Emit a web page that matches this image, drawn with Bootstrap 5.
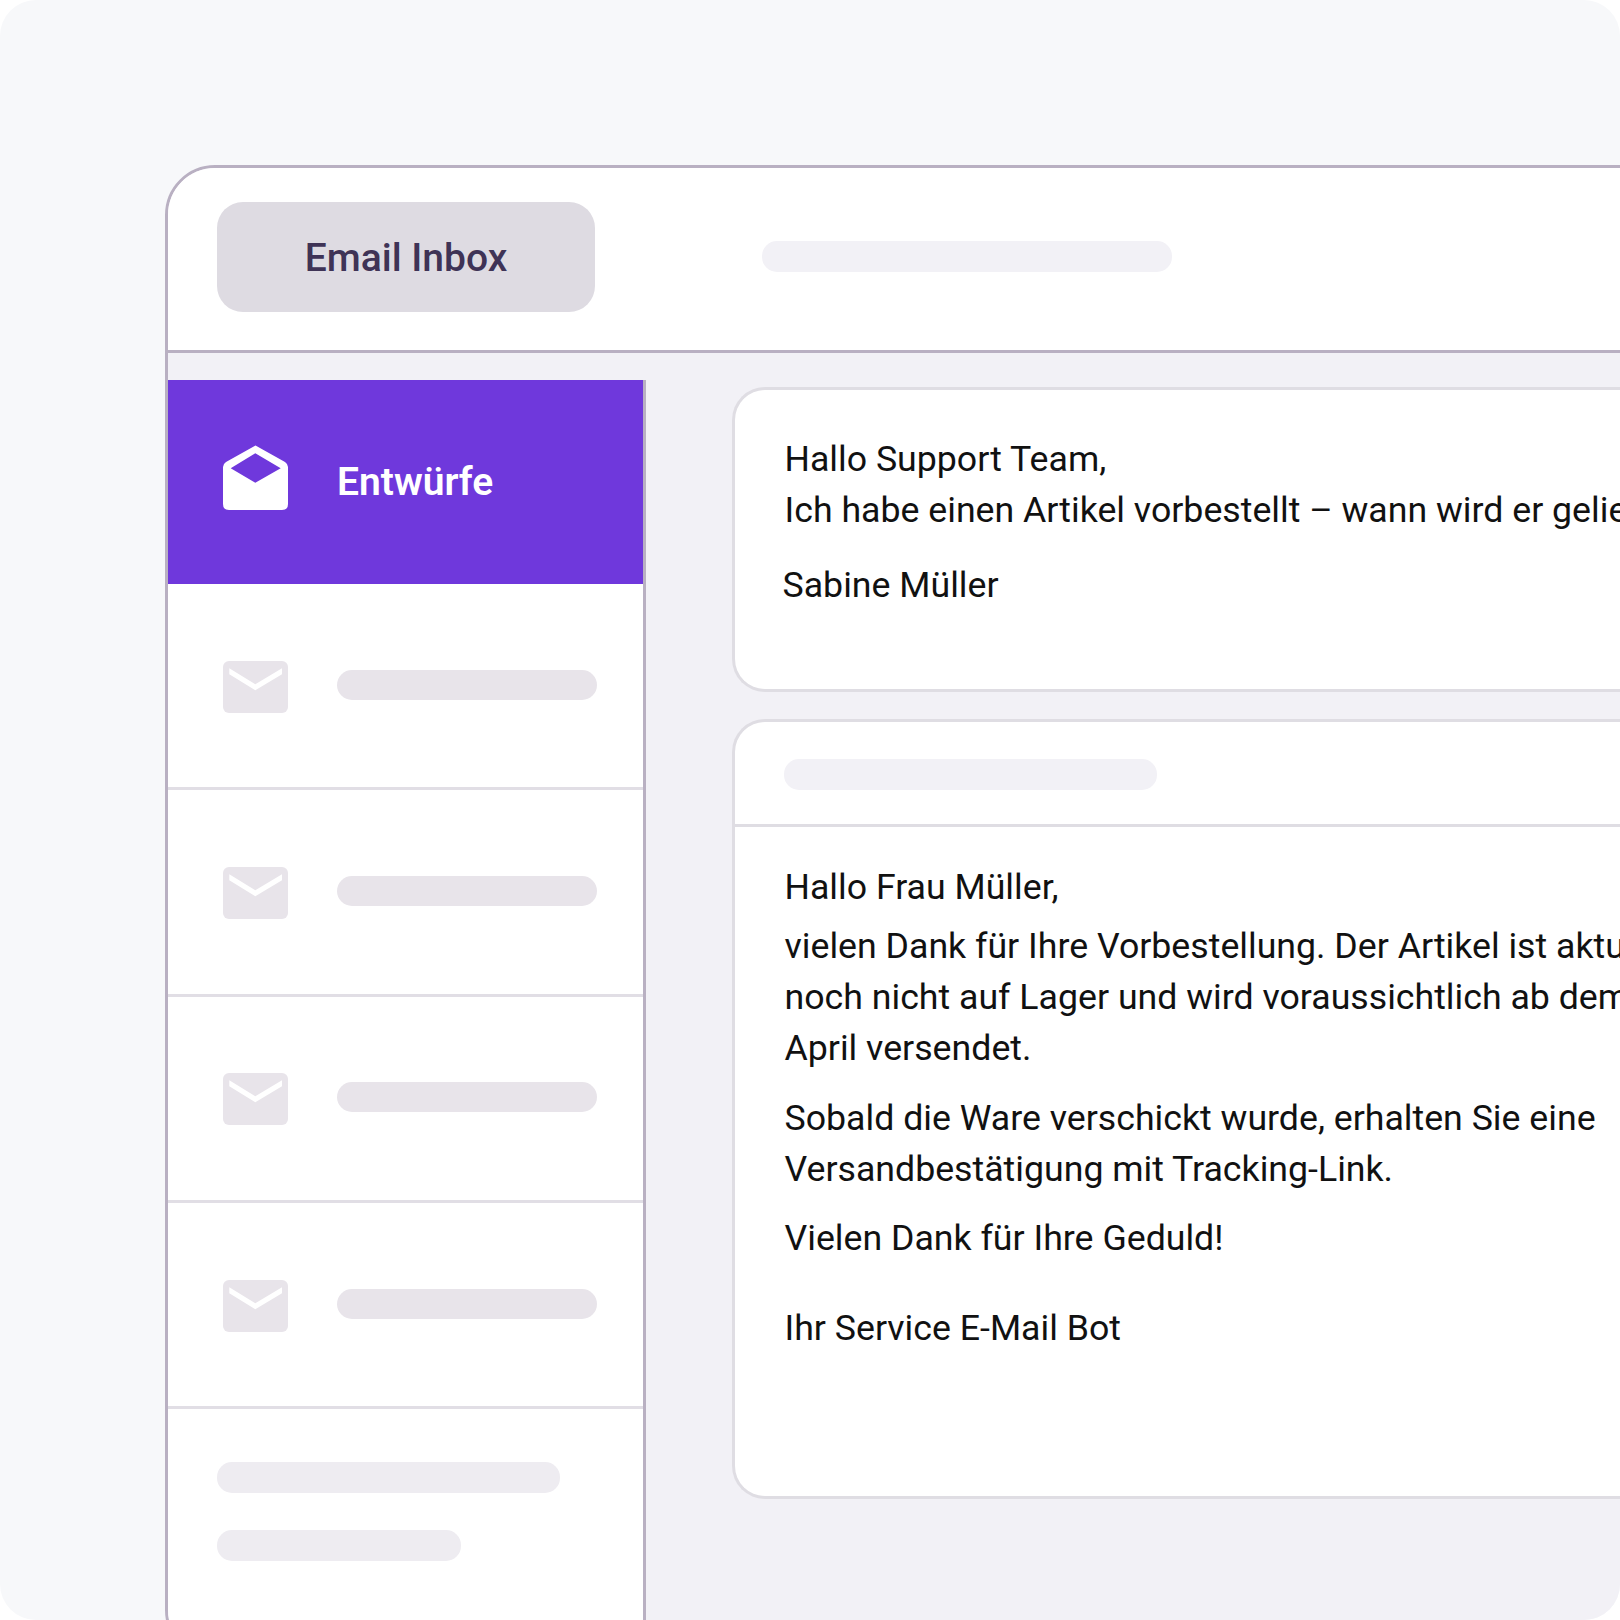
<!DOCTYPE html>
<html lang="de">
<head>
<meta charset="utf-8">
<title>Email Inbox</title>
<link href="https://cdn.jsdelivr.net/npm/bootstrap@5.3.0/dist/css/bootstrap.min.css" rel="stylesheet">
<style>
html,body{margin:0;background:#fff;overflow:hidden}
.stage{width:1620px;height:1620px;background:#f7f8fa;border-radius:36px;padding:165px 0 0 165px;overflow:hidden;font-family:Roboto,"Liberation Sans",sans-serif}
.frame{width:1515px;height:1495px;background:#f2f1f6;border:3px solid #b9b0c2;border-radius:50px;overflow:hidden}
.top-bar{height:185px;background:#fff;border-bottom:3px solid #b9b0c2;padding-left:49px}
.title-pill{width:378px;height:110px;margin-top:-4px;padding-top:2px;background:#dedbe2;border-radius:26px;color:#3f3356;font-size:39px;font-weight:500}
.skel{border-radius:15px;height:31px}
.skel-top{width:410px;margin-left:167px;margin-top:-6px;background:#f2f1f6}
.work{height:1307px}
.side{width:478px;margin-top:27px;background:#fff;border-right:3px solid #b9b0c2;flex:none}
.side-row{height:206.3px;border-bottom:3px solid #e1dee5;padding:2px 0 0 55px;gap:49px}
.side-row.is-active{height:204px;background:#6f38dc;border-bottom:0;color:#fff;font-size:39px;font-weight:600;padding:0 0 0 55px}
.side-row.is-active .side-ico{margin-top:-9px}
.side-ico{width:65px;flex:none;display:block}
.skel-row{width:260px;height:30px;background:#e8e4ea;margin-top:-4px}
.side-foot{padding:53px 0 0 49px;gap:37px}
.skel-foot{background:#eeecf1}
.skel-foot.w1{width:343px}
.skel-foot.w2{width:244px}
.reading{padding:34px 0 0 86px;gap:27px;width:1000px;flex:none}
.msg{width:1000px;background:#fff;border:3px solid #dfdde3;border-right:0;border-radius:33px 0 0 33px;color:#111;font-size:35.7px;line-height:51px;white-space:nowrap}
.msg p{margin:0}
.msg-a{height:305px;padding:44px 0 0 49.5px}
.msg-b{height:780px}
.msg-head{height:105px;border-bottom:3px solid #dfdde3;padding:3px 0 0 49px}
.skel-msg{width:373px;background:#f2f1f6}
.msg-body{padding:35px 0 0 49.5px}
.sign-a{margin:24px 0 0 -2px!important}
.gap-s{margin-top:8px!important}
.gap-m{margin-top:19px!important}
.gap-n{margin-top:18px!important}
.gap-l{margin-top:39px!important}
</style>
</head>
<body>
<div class="stage">
  <div class="frame">
    <div class="top-bar d-flex align-items-center">
      <div class="title-pill d-flex align-items-center justify-content-center">Email Inbox</div>
      <div class="skel skel-top"></div>
    </div>
    <div class="work d-flex">
      <div class="side d-flex flex-column">
        <div class="side-row is-active d-flex align-items-center">
          <svg class="side-ico" viewBox="0 0 65 65" height="65"><path fill="#fff" fill-rule="evenodd" d="M32.5.5 62 17q3 2 3 5v37q0 6-6 6H6q-6 0-6-6V22q0-3 3-5ZM7.7 23.3 32.3 37.7 57.7 23.3 32.3 8.3Z"/></svg>
          <span>Entwürfe</span>
        </div>
        <div class="side-row d-flex align-items-center">
          <svg class="side-ico" viewBox="0 0 65 52" height="52"><rect width="65" height="52" rx="6" fill="#e8e4ea"/><path fill="#fff" d="M6.3 7.3 32.3 23.3 59 7.3v6L32.3 29.3 6.3 13.3Z"/></svg>
          <div class="skel skel-row"></div>
        </div>
        <div class="side-row d-flex align-items-center">
          <svg class="side-ico" viewBox="0 0 65 52" height="52"><rect width="65" height="52" rx="6" fill="#e8e4ea"/><path fill="#fff" d="M6.3 7.3 32.3 23.3 59 7.3v6L32.3 29.3 6.3 13.3Z"/></svg>
          <div class="skel skel-row"></div>
        </div>
        <div class="side-row d-flex align-items-center">
          <svg class="side-ico" viewBox="0 0 65 52" height="52"><rect width="65" height="52" rx="6" fill="#e8e4ea"/><path fill="#fff" d="M6.3 7.3 32.3 23.3 59 7.3v6L32.3 29.3 6.3 13.3Z"/></svg>
          <div class="skel skel-row"></div>
        </div>
        <div class="side-row d-flex align-items-center">
          <svg class="side-ico" viewBox="0 0 65 52" height="52"><rect width="65" height="52" rx="6" fill="#e8e4ea"/><path fill="#fff" d="M6.3 7.3 32.3 23.3 59 7.3v6L32.3 29.3 6.3 13.3Z"/></svg>
          <div class="skel skel-row"></div>
        </div>
        <div class="side-foot d-flex flex-column">
          <div class="skel skel-foot w1"></div>
          <div class="skel skel-foot w2"></div>
        </div>
      </div>
      <div class="reading d-flex flex-column">
        <div class="msg msg-a">
          <p>Hallo Support Team,<br>Ich habe einen Artikel vorbestellt – wann wird er geliefert?</p>
          <p class="sign-a">Sabine Müller</p>
        </div>
        <div class="msg msg-b">
          <div class="msg-head d-flex align-items-center"><div class="skel skel-msg"></div></div>
          <div class="msg-body">
            <p>Hallo Frau Müller,</p>
            <p class="gap-s">vielen Dank für Ihre Vorbestellung. Der Artikel ist aktuell<br>noch nicht auf Lager und wird voraussichtlich ab dem<br>April versendet.</p>
            <p class="gap-m">Sobald die Ware verschickt wurde, erhalten Sie eine<br>Versandbestätigung mit Tracking-Link.</p>
            <p class="gap-n">Vielen Dank für Ihre Geduld!</p>
            <p class="gap-l">Ihr Service E-Mail Bot</p>
          </div>
        </div>
      </div>
    </div>
  </div>
</div>
<script src="https://cdn.jsdelivr.net/npm/bootstrap@5.3.0/dist/js/bootstrap.bundle.min.js"></script>
</body>
</html>
